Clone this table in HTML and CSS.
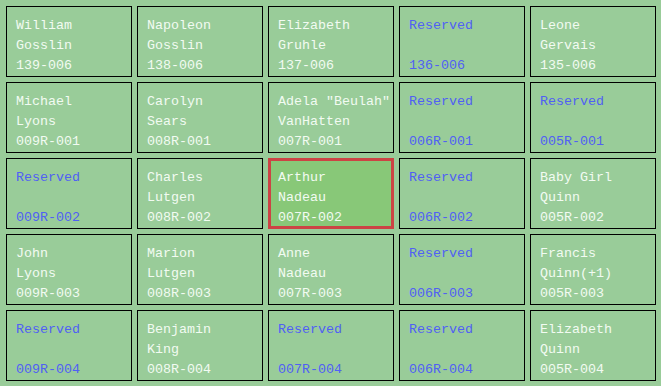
FILE: index.html
```html
<!DOCTYPE html>
<html>
<head>
<meta charset="utf-8">
<link rel="stylesheet" href="styles.css">
</head>
<body>
<div class="grid">
  <div class="cell"><span>William</span><span>Gosslin</span><span>139-006</span></div>
  <div class="cell"><span>Napoleon</span><span>Gosslin</span><span>138-006</span></div>
  <div class="cell"><span>Elizabeth</span><span>Gruhle</span><span>137-006</span></div>
  <div class="cell reserved"><span>Reserved</span><span>&nbsp;</span><span>136-006</span></div>
  <div class="cell"><span>Leone</span><span>Gervais</span><span>135-006</span></div>

  <div class="cell"><span>Michael</span><span>Lyons</span><span>009R-001</span></div>
  <div class="cell"><span>Carolyn</span><span>Sears</span><span>008R-001</span></div>
  <div class="cell"><span>Adela "Beulah"</span><span>VanHatten</span><span>007R-001</span></div>
  <div class="cell reserved"><span>Reserved</span><span>&nbsp;</span><span>006R-001</span></div>
  <div class="cell reserved"><span>Reserved</span><span>&nbsp;</span><span>005R-001</span></div>

  <div class="cell reserved"><span>Reserved</span><span>&nbsp;</span><span>009R-002</span></div>
  <div class="cell"><span>Charles</span><span>Lutgen</span><span>008R-002</span></div>
  <div class="cell selected"><span>Arthur</span><span>Nadeau</span><span>007R-002</span></div>
  <div class="cell reserved"><span>Reserved</span><span>&nbsp;</span><span>006R-002</span></div>
  <div class="cell"><span>Baby Girl</span><span>Quinn</span><span>005R-002</span></div>

  <div class="cell"><span>John</span><span>Lyons</span><span>009R-003</span></div>
  <div class="cell"><span>Marion</span><span>Lutgen</span><span>008R-003</span></div>
  <div class="cell"><span>Anne</span><span>Nadeau</span><span>007R-003</span></div>
  <div class="cell reserved"><span>Reserved</span><span>&nbsp;</span><span>006R-003</span></div>
  <div class="cell"><span>Francis</span><span>Quinn(+1)</span><span>005R-003</span></div>

  <div class="cell reserved"><span>Reserved</span><span>&nbsp;</span><span>009R-004</span></div>
  <div class="cell"><span>Benjamin</span><span>King</span><span>008R-004</span></div>
  <div class="cell reserved"><span>Reserved</span><span>&nbsp;</span><span>007R-004</span></div>
  <div class="cell reserved"><span>Reserved</span><span>&nbsp;</span><span>006R-004</span></div>
  <div class="cell"><span>Elizabeth</span><span>Quinn</span><span>005R-004</span></div>
</div>
</body>
</html>
```
FILE: styles.css
```css
html, body {
  margin: 0;
  padding: 0;
  background: #99cc99;
}
body {
  width: 661px;
  height: 386px;
  overflow: hidden;
  font-family: "Liberation Mono", "DejaVu Sans Mono", monospace;
  font-size: 13.33px;
}
.grid {
  display: grid;
  grid-template-columns: repeat(5, 126px);
  grid-template-rows: repeat(5, 71px);
  column-gap: 5px;
  row-gap: 5px;
  padding: 6px 0 0 6px;
}
.cell {
  box-sizing: border-box;
  border: 1px solid #000;
  padding: 9px 0 0 9px;
  display: flex;
  flex-direction: column;
  color: #f2fbf2;
  line-height: 20px;
  white-space: nowrap;
}
.cell.reserved {
  color: #5060f4;
}
.cell.selected {
  border: 3px solid #cc4444;
  padding: 7px 0 0 7px;
  background: #88c878;
}
```
